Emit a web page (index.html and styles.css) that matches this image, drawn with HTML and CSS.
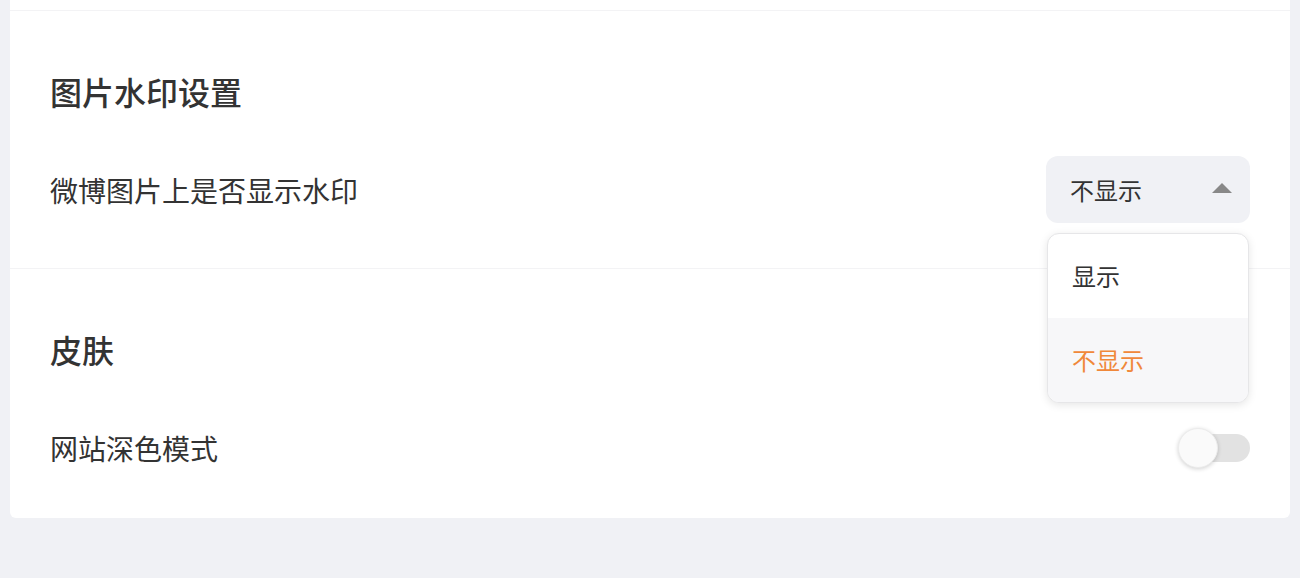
FILE: index.html
```html
<!DOCTYPE html>
<html lang="zh-CN">
<head>
  <meta charset="UTF-8" />
  <title>设置</title>
  <link rel="stylesheet" href="styles.css">
</head>
<body>
  <div class="tarjeta">
    <div class="seccion-previa"></div>

    <div class="seccion">
      <h3>图片水印设置</h3>
      <div class="fila">
        <span class="etiqueta">微博图片上是否显示水印</span>
        <div class="selector">
          <div class="selector-caja">
            <span>不显示</span>
            <span class="flecha"></span>
          </div>
          <ul class="menu">
            <li>显示</li>
            <li class="activo">不显示</li>
          </ul>
        </div>
      </div>
    </div>

    <div class="seccion ultima">
      <h3>皮肤</h3>
      <div class="fila">
        <span class="etiqueta">网站深色模式</span>
        <div class="interruptor">
          <span class="pista"></span>
          <span class="bola"></span>
        </div>
      </div>
    </div>
  </div>
</body>
</html>
```

FILE: styles.css
```css
body {
  margin: 0;
  padding: 0 10px 60px;
  background: #f0f1f5;
  font-family: "Noto Sans CJK SC", "Noto Sans", sans-serif;
  color: #333;
}
.tarjeta {
  background: #fff;
  border-radius: 0 0 6px 6px;
}
.seccion-previa {
  height: 10px;
  border-bottom: 1px solid #f3f3f5;
}
.seccion {
  padding: 58px 40px 45px;
  border-bottom: 1px solid #f3f3f5;
}
.seccion.ultima {
  border-bottom: none;
  padding-bottom: 37px;
}
.seccion h3 {
  margin: 0;
  font-size: 32px;
  line-height: 44px;
  font-weight: 500;
  color: #333;
}
.fila {
  margin-top: 43px;
  min-height: 67px;
  display: flex;
  align-items: center;
  justify-content: space-between;
}
.etiqueta {
  font-size: 28px;
  line-height: 40px;
}
.selector {
  position: relative;
  width: 204px;
}
.selector-caja {
  height: 67px;
  box-sizing: border-box;
  padding: 0 18px 0 24px;
  background: #f0f1f5;
  border-radius: 12px;
  display: flex;
  align-items: center;
  justify-content: space-between;
  font-size: 24px;
}
.flecha {
  width: 0;
  height: 0;
  border-left: 10px solid transparent;
  border-right: 10px solid transparent;
  border-bottom: 10px solid #888;
  margin-top: -3px;
}
.menu {
  position: absolute;
  top: 77px;
  left: 1px;
  right: 1px;
  margin: 0;
  padding: 0;
  list-style: none;
  background: #fff;
  border: 1px solid #e6e6e8;
  border-radius: 12px;
  box-shadow: 0 2px 8px rgba(0, 0, 0, 0.1);
  overflow: hidden;
  z-index: 2;
}
.menu li {
  height: 84px;
  line-height: 84px;
  padding-left: 24px;
  font-size: 24px;
  color: #333;
}
.menu li.activo {
  background: #f7f7f9;
  color: #f0883a;
}
.interruptor {
  position: relative;
  width: 72px;
  height: 40px;
}
.pista {
  position: absolute;
  right: 0;
  top: 6px;
  width: 68px;
  height: 28px;
  border-radius: 14px;
  background: #e2e2e2;
}
.bola {
  position: absolute;
  left: 0;
  top: 0;
  width: 40px;
  height: 40px;
  box-sizing: border-box;
  border-radius: 50%;
  background: #fafafa;
  border: 1px solid #ececec;
  box-shadow: 0 1px 4px rgba(0, 0, 0, 0.18);
}
```
